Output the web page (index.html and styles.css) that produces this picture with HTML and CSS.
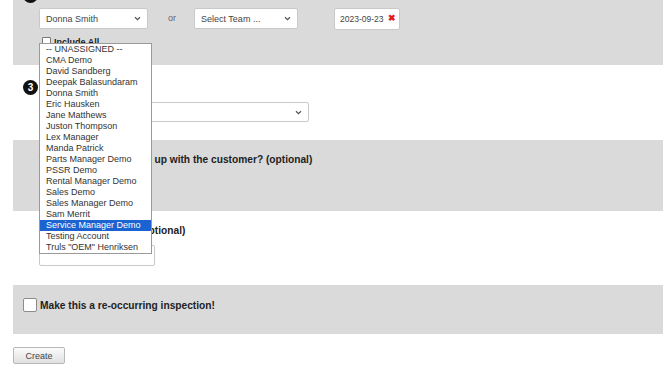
FILE: index.html
```html
<!DOCTYPE html>
<html lang="en">
<head>
    <meta charset="UTF-8">
    <meta name="viewport" content="width=device-width, initial-scale=1.0">
    <title>New Inspection</title>
    <link rel="stylesheet" href="styles.css">
</head>
<body>
    <div class="page">
        <!-- step 2: who does it and when -->
        <section class="step gray step-assign">
            <div class="step-head">
                <span class="badge">2</span>
            </div>
            <div class="step-body">
                <div class="assign-row">
                    <div class="picker">
                        <div class="select select-user">
                            <span>Donna Smith</span>
                            <svg class="chev" width="7" height="5" viewBox="0 0 7 5"><path d="M1 1.2 L3.5 3.6 L6 1.2" fill="none" stroke="#555" stroke-width="1.3"/></svg>
                        </div>
                        <ul class="options">
                            <li>-- UNASSIGNED --</li>
                            <li>CMA Demo</li>
                            <li>David Sandberg</li>
                            <li>Deepak Balasundaram</li>
                            <li>Donna Smith</li>
                            <li>Eric Hausken</li>
                            <li>Jane Matthews</li>
                            <li>Juston Thompson</li>
                            <li>Lex Manager</li>
                            <li>Manda Patrick</li>
                            <li>Parts Manager Demo</li>
                            <li>PSSR Demo</li>
                            <li>Rental Manager Demo</li>
                            <li>Sales Demo</li>
                            <li>Sales Manager Demo</li>
                            <li>Sam Merrit</li>
                            <li class="active">Service Manager Demo</li>
                            <li>Testing Account</li>
                            <li>Truls "OEM" Henriksen</li>
                        </ul>
                    </div>
                    <span class="or">or</span>
                    <div class="select select-team">
                        <span>Select Team ...</span>
                        <svg class="chev" width="7" height="5" viewBox="0 0 7 5"><path d="M1 1.2 L3.5 3.6 L6 1.2" fill="none" stroke="#555" stroke-width="1.3"/></svg>
                    </div>
                    <div class="date">
                        <span>2023-09-23</span>
                        <span class="clear">&#10006;</span>
                    </div>
                </div>
                <label class="include"><input type="checkbox" class="mini-check"> Include All</label>
            </div>
        </section>

        <!-- step 3: template -->
        <section class="step step-template">
            <div class="step-head">
                <span class="badge">3</span>
            </div>
            <div class="step-body">
                <div class="select select-wide">
                    <span></span>
                    <svg class="chev" width="7" height="5" viewBox="0 0 7 5"><path d="M1 1.2 L3.5 3.6 L6 1.2" fill="none" stroke="#555" stroke-width="1.3"/></svg>
                </div>
            </div>
        </section>

        <section class="step gray step-followup">
            <div class="step-body">
                <p class="question">When should we follow up with the customer? (optional)</p>
                <input type="text" class="field field-date">
            </div>
        </section>

        <section class="step step-order">
            <div class="step-body">
                <p class="question">Work Order Number (optional)</p>
                <input type="text" class="field field-order">
            </div>
        </section>

        <section class="step gray step-repeat">
            <label class="repeat"><input type="checkbox" class="big-check"> Make this a re-occurring inspection!</label>
        </section>

        <button class="create">Create</button>
    </div>
</body>
</html>
```

FILE: styles.css
```css
body {
    margin: 0;
    font-family: "Liberation Sans", Arial, sans-serif;
    background: #fff;
    color: #333;
}
.page {
    margin: -27px 0 0 13px;
}
.step {
    background: #fff;
}
.step.gray {
    background: #dadada;
}
.step-head {
    display: flex;
    align-items: center;
    height: 15px;
    padding-left: 10px;
}
.badge {
    width: 15px;
    height: 15px;
    border-radius: 50%;
    background: #111;
    color: #fff;
    font-size: 10px;
    font-weight: bold;
    line-height: 15px;
    text-align: center;
}
.step-body {
    padding-left: 26px;
}

/* step 2 */
.step-assign {
    padding: 15px 0 19px;
}
.step-assign .step-body {
    margin-top: 5px;
}
.assign-row {
    display: flex;
    align-items: flex-start;
}
.picker {
    position: relative;
}
.select {
    display: flex;
    align-items: center;
    justify-content: space-between;
    box-sizing: border-box;
    height: 21px;
    padding: 0 6px 0 6px;
    background: #fff;
    border: 1px solid #c9c9c9;
    border-radius: 2px;
    font-size: 9px;
    color: #444;
}
.select-user {
    width: 109px;
}
.select-team {
    width: 104px;
}
.or {
    margin: 0 18px 0 20px;
    font-size: 9px;
    line-height: 21px;
    color: #666;
}
.date {
    display: flex;
    align-items: center;
    justify-content: space-between;
    box-sizing: border-box;
    width: 66px;
    height: 22px;
    margin-left: 36px;
    padding: 0 3px 0 5px;
    background: #fff;
    border: 1px solid #c9c9c9;
    border-radius: 2px;
    font-size: 8.5px;
    color: #444;
}
.clear {
    color: #e01b1b;
    font-size: 9px;
    font-weight: bold;
    margin-top: -2px;
}
.include {
    display: flex;
    align-items: center;
    margin: 7px 0 0 3px;
    height: 9px;
    font-size: 9px;
    font-weight: bold;
    color: #222;
}
.mini-check {
    appearance: none;
    width: 9px;
    height: 9px;
    margin: 0 3px 0 0;
    background: #fff;
    border: 1px solid #777;
    border-radius: 1px;
}

/* open user list */
.options {
    position: absolute;
    top: 35px;
    left: 0;
    z-index: 5;
    width: 113px;
    box-sizing: border-box;
    margin: 0;
    padding: 0;
    list-style: none;
    background: #fff;
    border: 1px solid #9a9a9a;
}
.options li {
    height: 11px;
    padding-left: 6px;
    font-size: 9px;
    line-height: 11px;
    color: #333;
    white-space: nowrap;
}
.options li.active {
    background: #1b63d0;
    color: #fff;
}

/* step 3 */
.step-template {
    padding: 15px 0 18px;
}
.step-template .step-body {
    margin-top: 7px;
}
.select-wide {
    width: 270px;
    height: 20px;
}

/* questions */
.question {
    margin: 0;
    font-size: 10.2px;
    font-weight: bold;
    line-height: 12px;
    color: #222;
}
.field {
    display: block;
    box-sizing: border-box;
    background: #fff;
    border: 1px solid #c9c9c9;
    border-radius: 2px;
    font-size: 9px;
}
.step-followup {
    padding: 14px 0 17px;
}
.field-date {
    width: 105px;
    height: 17px;
    margin-top: 11px;
}
.step-order {
    padding: 14px 0 19px;
}
.field-order {
    width: 116px;
    height: 21px;
    margin-top: 8px;
}

/* re-occurring */
.step-repeat {
    padding: 13px 0 22px 10px;
}
.repeat {
    display: flex;
    align-items: center;
    height: 14px;
    font-size: 10.2px;
    font-weight: bold;
    color: #222;
}
.big-check {
    appearance: none;
    width: 14px;
    height: 14px;
    margin: 0 3px 0 0;
    background: #fff;
    border: 1px solid #8c8c8c;
    border-radius: 2px;
}

.create {
    display: block;
    width: 52px;
    height: 17px;
    margin-top: 13px;
    padding: 0;
    background: linear-gradient(#fbfbfb, #e0e0e0);
    border: 1px solid #b8b8b8;
    border-radius: 2px;
    font-family: "Liberation Sans", Arial, sans-serif;
    font-size: 9px;
    color: #444;
}
```
